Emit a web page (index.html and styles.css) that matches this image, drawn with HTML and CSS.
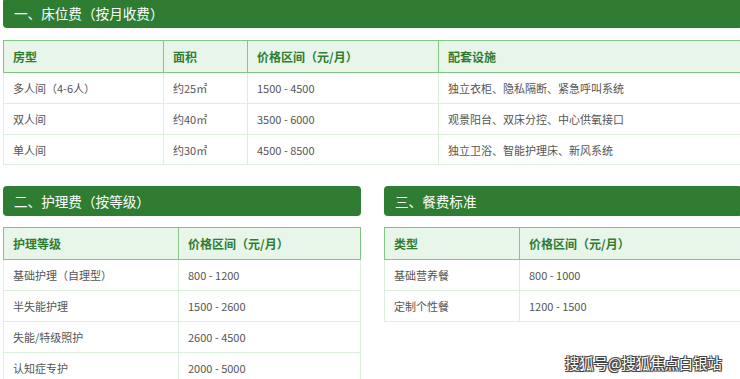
FILE: index.html
```html
<!DOCTYPE html>
<html lang="zh-CN">
<head>
<meta charset="utf-8">
<link rel="stylesheet" href="styles.css">
</head>
<body>
<div class="page">
  <section class="section">
    <h2 class="section-title">一、床位费（按月收费）</h2>
    <table class="price-table t1">
      <colgroup><col class="c1"><col class="c2"><col class="c3"><col></colgroup>
      <thead><tr><th>房型</th><th>面积</th><th>价格区间（元/月）</th><th>配套设施</th></tr></thead>
      <tbody>
        <tr><td>多人间（4-6人）</td><td>约25㎡</td><td>1500 - 4500</td><td>独立衣柜、隐私隔断、紧急呼叫系统</td></tr>
        <tr><td>双人间</td><td>约40㎡</td><td>3500 - 6000</td><td>观景阳台、双床分控、中心供氧接口</td></tr>
        <tr><td>单人间</td><td>约30㎡</td><td>4500 - 8500</td><td>独立卫浴、智能护理床、新风系统</td></tr>
      </tbody>
    </table>
  </section>
  <div class="grid">
    <section class="section">
      <h2 class="section-title">二、护理费（按等级）</h2>
      <table class="price-table t2">
        <colgroup><col class="c1"><col></colgroup>
        <thead><tr><th>护理等级</th><th>价格区间（元/月）</th></tr></thead>
        <tbody>
          <tr><td>基础护理（自理型）</td><td>800 - 1200</td></tr>
          <tr><td>半失能护理</td><td>1500 - 2600</td></tr>
          <tr><td>失能/特级照护</td><td>2600 - 4500</td></tr>
          <tr><td>认知症专护</td><td>2000 - 5000</td></tr>
        </tbody>
      </table>
    </section>
    <section class="section">
      <h2 class="section-title">三、餐费标准</h2>
      <table class="price-table t3">
        <colgroup><col class="c1"><col></colgroup>
        <thead><tr><th>类型</th><th>价格区间（元/月）</th></tr></thead>
        <tbody>
          <tr><td>基础营养餐</td><td>800 - 1000</td></tr>
          <tr><td>定制个性餐</td><td>1200 - 1500</td></tr>
        </tbody>
      </table>
    </section>
  </div>
</div>
<div class="watermark">搜狐号@搜狐焦点白银站</div>
</body>
</html>
```

FILE: styles.css
```css
html, body {
  margin: 0;
  padding: 0;
  background: #ffffff;
  overflow: hidden;
  height: 379px;
}
body {
  font-family: "Noto Sans CJK SC", "Microsoft YaHei", sans-serif;
  color: #555555;
  position: relative;
  width: 740px;
}
.page {
  width: 739px;
  margin: -2px 0 0 3px;
}
.section-title {
  margin: 0;
  height: 30px;
  line-height: 30px;
  padding-left: 11px;
  background: #2e7d32;
  color: #ffffff;
  font-size: 13.6px;
  font-weight: normal;
  border-radius: 4px;
}
.price-table {
  width: 100%;
  border-collapse: collapse;
  margin-top: 11px;
  table-layout: fixed;
}
.t1 { margin-top: 12px; }
.t1 .c1 { width: 160px; }
.t1 .c2 { width: 84px; }
.t1 .c3 { width: 191px; }
.t2 .c1 { width: 175px; }
.t3 .c1 { width: 135px; }
.price-table th {
  background: #e8f5e9;
  color: #2e7d32;
  font-size: 12px;
  font-weight: bold;
  text-align: left;
  height: 31.8px;
  padding: 0 9px;
  border: 1px solid #81c784;
  box-sizing: border-box;
}
.price-table td {
  font-size: 11px;
  color: #555555;
  height: 30.9px;
  padding: 0 9px;
  border: 1px solid #dcefdd;
  box-sizing: border-box;
  white-space: nowrap;
}
.price-table tbody tr:first-child td {
  border-top: 1px solid #81c784;
}
.grid {
  display: grid;
  grid-template-columns: 1fr 1fr;
  column-gap: 23px;
  margin-top: 21px;
}
.watermark {
  position: absolute;
  left: 565px;
  top: 352px;
  font-size: 14.5px;
  font-weight: normal;
  color: #ffffff;
  letter-spacing: -0.2px;
  text-shadow: 1px 1px 0 #444, -1px -1px 0 #444, 1px -1px 0 #444, -1px 1px 0 #444, 0 1px 1px #444, 1px 0 1px #444;
}
```
